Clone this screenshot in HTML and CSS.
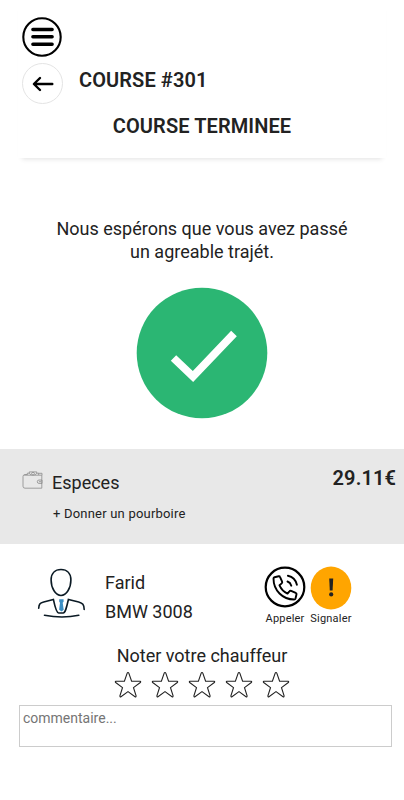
FILE: index.html
```html
<!DOCTYPE html>
<html lang="fr">
<head>
    <meta charset="UTF-8">
    <meta name="viewport" content="width=device-width, initial-scale=1.0">
    <title>Course terminée</title>
    <link rel="stylesheet" href="styles.css">
</head>
<body>
    <header>
        <button class="menu" aria-label="Menu">
            <svg width="40" height="40" viewBox="0 0 40 40" fill="none" stroke="#000" stroke-linecap="round">
                <circle cx="20" cy="20" r="18.7" stroke-width="2.1"/>
                <path d="M10.900 12.500h19.200M10.900 19.800h19.200M10.900 27.300h19.200" stroke-width="3.500"/>
            </svg>
        </button>
        <div class="course">
            <button class="back" aria-label="Retour">
                <svg width="22" height="16" viewBox="0 0 22 16" fill="none" stroke="#000" stroke-width="2.4" stroke-linecap="round" stroke-linejoin="round">
                    <path d="M20.3 8H2.500M8 2L1.900 8l6.100 6"/>
                </svg>
            </button>
            <h1>COURSE #301</h1>
        </div>
        <h2>COURSE TERMINEE</h2>
    </header>

    <section class="message">
        <p>Nous espérons que vous avez passé<br>un agreable trajét.</p>
        <svg width="132" height="132" viewBox="0 0 132 132">
            <circle cx="66" cy="66" r="65.3" fill="#2bb673"/>
            <path d="M37.500 71L57 89.500L98 46.500" fill="none" stroke="#fff" stroke-width="7.800"/>
        </svg>
    </section>

    <section class="payment">
        <svg class="wallet" width="22" height="18" viewBox="0 0 22 18" fill="none" stroke="#8a8a8a" stroke-width="0.8">
            <path d="M2.200 4.200h17.600v13H3q-2 0-2-2V5.500q0-1.800 2-2h2M20 4.200V2.300h-3.500M20 9h-3q-1.700 0-1.700 1.700t1.700 1.700h3z"/>
            <path d="M5.300 4V2.200h2V.9h7.400v1.300h2V4M7.300 2.200l2 2M14.700 2.200l-2 2"/>
            <circle cx="11" cy="2.700" r="1.400"/>
            <circle cx="18" cy="10.700" r=".5"/>
        </svg>
        <div class="method">
            <p class="type">Especes</p>
            <p class="tip">+ Donner un pourboire</p>
        </div>
        <strong class="price">29.11€</strong>
    </section>

    <section class="driver">
        <svg width="50" height="50" viewBox="0 0 50 50" fill="none" stroke="#0b1a24" stroke-width="1.6" stroke-linecap="round">
            <path d="M24 1.500c6 0 9.900 3.800 9.900 10.500 0 8-4.500 15.500-9.900 15.500s-9.900-7.500-9.900-15.500c0-6.700 3.900-10.500 9.900-10.500z"/>
            <path d="M1.700 40.200c.3-4.200 1-5.200 5-6.200l9.700-2.500c1.500 7 3 13.500 5.200 13.500h4.600c2.200 0 3.600-6.500 5.200-13.500l10.300 2.500c4 1.200 5.300 2.500 5.500 7.500"/>
            <path d="M7.500 47.200c11 2.200 24 2.200 34.300 0"/>
            <path d="M22.200 31.300h4.400v2.500l-.9.900 1 7-2.100 1.900-2.500-1.900.9-7-.8-.9z" fill="#3c8fc4" stroke="none"/>
        </svg>
        <div class="info">
            <p>Farid</p>
            <p>BMW 3008</p>
        </div>
        <div class="actions">
            <div class="action">
                <svg width="42" height="42" viewBox="0 0 42 42" fill="none" stroke="#000" stroke-width="1.9" stroke-linecap="round" stroke-linejoin="round">
                    <circle cx="21" cy="21" r="19.300" stroke-width="2.200"/>
                    <path d="M10.500 11.200l4.200-.9q1-.2 1.400.8l2 4.600q.4 1-.4 1.700l-2.200 1.900c1.600 3.700 4.300 6.500 8 8.300l1.900-2.300q.7-.9 1.700-.5l4.600 2q1 .4.800 1.500l-1 4.200q-.3 1-1.400 1C18.700 33.500 9.500 24.500 9.500 12.500q0-1.100 1-1.300z"/>
                    <path d="M23.500 15.500c2 .7 3.200 2 3.800 4.200M23.900 9.800c4.700 1 7.900 4.200 9 9"/>
                </svg>
                <span>Appeler</span>
            </div>
            <div class="action">
                <svg width="42" height="44" viewBox="0 0 42 44">
                    <ellipse cx="21" cy="22" rx="20.300" ry="21.500" fill="#ffa500"/>
                    <path d="M19.200 12.500h4l-.6 12h-2.800z" fill="#222"/>
                    <circle cx="21.200" cy="28.400" r="2.100" fill="#222"/>
                </svg>
                <span>Signaler</span>
            </div>
        </div>
    </section>

    <section class="rating">
        <p>Noter votre chauffeur</p>
        <div class="stars">
            <svg viewBox="0 0 28 28"><path d="M14 1.500q.6 0 .8.600l2.800 8.200h8.500q1.100.3.200 1.200l-6.800 5.100 2.600 8.200q.1 1.400-1.100.9L14 20.600l-7 5.100q-1.200.5-1.100-.9l2.600-8.200-6.800-5.100q-.9-.9.200-1.200h8.500l2.800-8.200q.2-.6.800-.6z"/></svg>
            <svg viewBox="0 0 28 28"><path d="M14 1.500q.6 0 .8.600l2.800 8.200h8.500q1.100.3.200 1.200l-6.800 5.100 2.600 8.200q.1 1.400-1.100.9L14 20.600l-7 5.100q-1.200.5-1.100-.9l2.600-8.200-6.800-5.100q-.9-.9.200-1.200h8.500l2.800-8.200q.2-.6.800-.6z"/></svg>
            <svg viewBox="0 0 28 28"><path d="M14 1.500q.6 0 .8.600l2.800 8.200h8.500q1.100.3.200 1.200l-6.800 5.100 2.600 8.200q.1 1.400-1.100.9L14 20.600l-7 5.100q-1.200.5-1.100-.9l2.600-8.200-6.800-5.100q-.9-.9.200-1.200h8.500l2.800-8.200q.2-.6.800-.6z"/></svg>
            <svg viewBox="0 0 28 28"><path d="M14 1.500q.6 0 .8.600l2.800 8.200h8.500q1.100.3.200 1.200l-6.800 5.100 2.600 8.200q.1 1.400-1.100.9L14 20.600l-7 5.100q-1.200.5-1.100-.9l2.600-8.200-6.800-5.100q-.9-.9.200-1.200h8.500l2.800-8.200q.2-.6.800-.6z"/></svg>
            <svg viewBox="0 0 28 28"><path d="M14 1.500q.6 0 .8.600l2.800 8.200h8.500q1.100.3.200 1.200l-6.800 5.100 2.600 8.200q.1 1.400-1.100.9L14 20.600l-7 5.100q-1.200.5-1.100-.9l2.600-8.200-6.800-5.100q-.9-.9.200-1.200h8.500l2.800-8.200q.2-.6.800-.6z"/></svg>
        </div>
        <textarea placeholder="commentaire..."></textarea>
    </section>
</body>
</html>
```
FILE: styles.css
```css
* {
    box-sizing: border-box;
}

body {
    font-family: Roboto, "Liberation Sans", sans-serif;
    margin: 0;
    background-color: #fff;
    color: #222;
}

h1, h2, p {
    margin: 0;
}

svg {
    display: block;
    flex-shrink: 0;
}

button {
    padding: 0;
    border: none;
    background: none;
}

header {
    height: 158px;
    margin: 0 18px;
    padding: 17px 0 0 4px;
    box-shadow: 0 5px 5px -4px rgba(0, 0, 0, 0.12);
}

.menu {
    display: block;
}

.course {
    display: flex;
    margin-top: 6px;
}

.back {
    width: 41px;
    height: 41px;
    border: 1px solid #e4e4e4;
    border-radius: 50%;
    display: flex;
    align-items: center;
    justify-content: center;
}

h1, h2 {
    font-size: 20px;
    font-weight: 600;
    line-height: 24px;
    letter-spacing: 0.1px;
}

h1 {
    margin: 5px 0 0 16px;
}

h2 {
    margin: 10px 4px 0 0;
    text-align: center;
}

.message {
    height: 291px;
    padding-top: 59px;
    display: flex;
    flex-direction: column;
    align-items: center;
    font-size: 18px;
    line-height: 23px;
    text-align: center;
}

.message svg {
    margin-top: 24px;
}

.payment {
    height: 95px;
    padding: 22px 8px 0 22px;
    display: flex;
    background-color: #e8e8e8;
}

.method {
    flex: 1;
    margin-left: 8px;
}

.type {
    font-size: 18px;
    line-height: 24px;
}

.tip {
    margin: 10px 0 0 1px;
    font-size: 13px;
    line-height: 18px;
    letter-spacing: 0.2px;
}

.price {
    margin-top: -5px;
    font-size: 20px;
    font-weight: 600;
    line-height: 24px;
    letter-spacing: 0.1px;
}

.driver {
    height: 99px;
    padding: 22px 52px 0 37px;
    display: flex;
}

.driver > svg {
    margin-top: 2px;
}

.info {
    flex: 1;
    margin: 2px 0 0 18px;
    font-size: 18px;
    line-height: 29px;
}

.actions {
    display: flex;
    gap: 4px;
}

.action {
    width: 42px;
    height: 60px;
    display: flex;
    flex-direction: column;
    align-items: center;
    justify-content: space-between;
    font-size: 11px;
    line-height: 14px;
    letter-spacing: 0.2px;
}

.rating {
    display: flex;
    flex-direction: column;
    align-items: center;
    font-size: 18px;
    line-height: 26px;
}

.stars {
    display: flex;
    gap: 9px;
    margin: 2px 0 0;
}

.stars svg {
    width: 28px;
    height: 28px;
    fill: none;
    stroke: #222;
    stroke-width: 1.1;
}

textarea {
    width: 373px;
    height: 42px;
    margin: 6px 0 0 7px;
    padding: 2px 3px;
    border: 1px solid #ccc;
    font-family: inherit;
    font-size: 14px;
    line-height: 20px;
    resize: none;
}
```
